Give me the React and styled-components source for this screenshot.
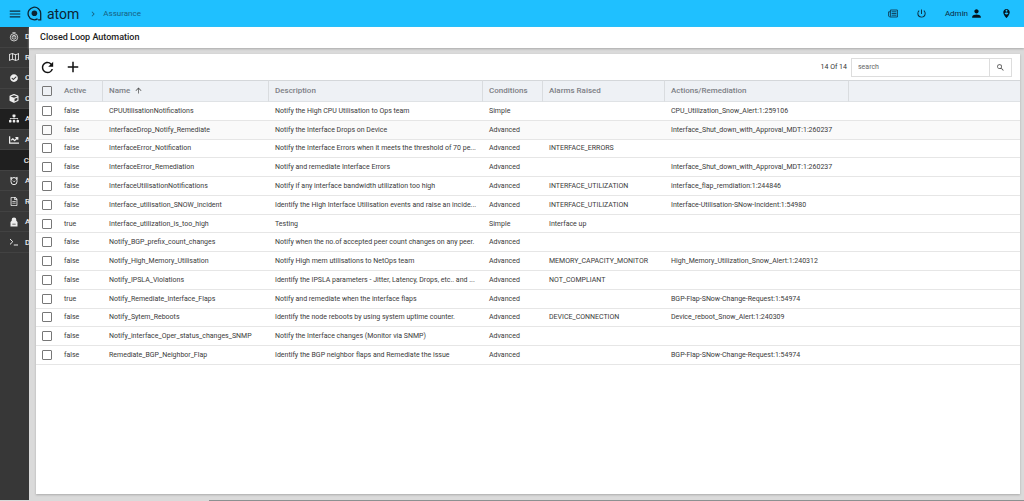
import React, { useState } from 'react';
import styled, { createGlobalStyle } from 'styled-components';
import {
  FaCube,
  FaCheckCircle,
  FaSitemap,
  FaChartLine,
  FaRegMap,
  FaRegFileAlt,
} from 'react-icons/fa';
import {
  MdMenu,
  MdRefresh,
  MdAdd,
  MdArrowUpward,
  MdChevronRight,
  MdPerson,
  MdPersonPinCircle,
  MdPowerSettingsNew,
  MdSearch,
} from 'react-icons/md';

const GlobalStyle = createGlobalStyle`
  * {
    box-sizing: border-box;
  }

  body {
    margin: 0;
    font-family: Roboto, sans-serif;
    font-size: 7px;
    color: #3a3a3a;
    background: #dadada;
  }

  button {
    display: flex;
    align-items: center;
    justify-content: center;
    padding: 0;
    border: 0;
    background: none;
    color: inherit;
    font: inherit;
    cursor: pointer;
  }
`;

const Root = styled.div`
  display: flex;
  flex-direction: column;
  height: 100vh;
`;

const TopBar = styled.header`
  display: flex;
  align-items: center;
  flex: none;
  height: 27px;
  padding: 0 12px 0 8px;
  background: #1fc0ff;
  color: #0c2a3c;
  font-size: 8px;
`;

const Brand = styled.a`
  display: flex;
  align-items: center;
  gap: 5px;
  margin-left: 5px;
  color: #0c2433;
  font-size: 14px;
  line-height: 24px;
  text-decoration: none;
`;

const Crumbs = styled.nav`
  display: flex;
  align-items: center;
  gap: 5px;
  margin-left: 9px;
  color: #17607f;

  a {
    color: inherit;
    text-decoration: none;
  }
`;

const TopActions = styled.div`
  display: flex;
  align-items: center;
  gap: 18px;
  margin-left: auto;
`;

const UserButton = styled.button`
  gap: 2px;
`;

const Body = styled.div`
  display: flex;
  flex: 1;
  min-height: 0;
`;

const SideBar = styled.nav`
  flex: none;
  width: 29px;
  overflow: hidden;
  background: #373737;
`;

const SideList = styled.ul`
  display: flex;
  flex-direction: column;
  height: 226px;
  margin: 0;
  padding: 0;
  list-style: none;
`;

const SideItem = styled.li`
  flex: 1;
  border-bottom: 1px solid #424242;
  background: ${props => (props.$dark ? '#1f1f1f' : 'transparent')};
`;

const SideLink = styled.a`
  display: flex;
  align-items: center;
  gap: 6px;
  height: 100%;
  padding-left: 9px;
  color: #eee;
  font-size: 8px;
  font-weight: 500;
  text-decoration: none;
  white-space: nowrap;

  svg {
    flex: none;
    width: 10px;
  }
`;

const SideIndent = styled.span`
  width: 11px;
`;

const Main = styled.main`
  display: flex;
  flex: 1;
  flex-direction: column;
  min-width: 0;
`;

const PageTitle = styled.h1`
  flex: none;
  margin: 0;
  padding-left: 11px;
  background: #fff;
  box-shadow: 0 1px 2px #aaa;
  color: #222;
  font-size: 9px;
  font-weight: 500;
  line-height: 21px;
`;

const Panel = styled.section`
  flex: 1;
  margin: 6px 4px 6px 7px;
  background: #fff;
  box-shadow: 0 1px 2px #aaa;
`;

const Toolbar = styled.div`
  display: flex;
  align-items: center;
  gap: 8px;
  height: 26px;
  padding: 0 8px 0 3px;
  color: #111;
`;

const Count = styled.span`
  margin-left: auto;
  color: #333;
`;

const SearchBox = styled.form`
  display: flex;
  width: 161px;
  height: 19px;
  margin-left: -4px;
  border: 1px solid #ddd;
`;

const SearchInput = styled.input`
  flex: 1;
  min-width: 0;
  padding: 0 6px;
  border: 0;
  outline: 0;
  color: #444;
  font: inherit;

  &::placeholder {
    color: #666;
  }
`;

const SearchButton = styled.button`
  && {
    width: 22px;
    border-left: 1px solid #ddd;
    color: #444;
  }
`;

const Table = styled.table`
  width: 100%;
  height: 285px;
  border-collapse: separate;
  border-spacing: 0;
  table-layout: fixed;
`;

const HeadCell = styled.th`
  height: 22px;
  padding: 0 6px;
  border-top: 1px solid #d4d7da;
  border-bottom: 1px solid #dfe2e5;
  border-right: ${props => (props.$line ? '1px solid #d9dcdf' : '0')};
  background: #eef1f5;
  color: #7d8085;
  font-size: 8px;
  font-weight: 500;
  line-height: 10px;
  text-align: left;
  white-space: nowrap;

  svg {
    margin-left: 4px;
    color: #555;
    vertical-align: top;
  }
`;

const Row = styled.tr`
  background: ${props => (props.$hover ? '#fafafa' : '#fff')};
`;

const Cell = styled.td`
  height: 18px;
  padding: 0 6px;
  overflow: hidden;
  border-bottom: 1px solid #e6e6e6;
  line-height: 12px;
  text-overflow: ellipsis;
  white-space: nowrap;
`;

const Check = styled.input`
  display: block;
  width: 10px;
  height: 10px;
  margin: 0;
  border: 1px solid #777;
  border-radius: 1px;
  appearance: none;

  &:checked {
    background: #1fc0ff;
  }
`;

const BottomStrip = styled.footer`
  flex: none;
  height: 1px;
  margin-left: 209px;
  background: #8c9091;
`;

const columns = [
  { width: 22 },
  { title: 'Active', width: 45, line: true },
  { title: 'Name', width: 166, line: true },
  { title: 'Description', width: 214, line: true },
  { title: 'Conditions', width: 60, line: true },
  { title: 'Alarms Raised', width: 122, line: true },
  { title: 'Actions/Remediation', width: 184, line: true },
  {},
];

const rules = [
  ['false', 'CPUUtilisationNotifications', 'Notify the High CPU Utilisation to Ops team', 'Simple', '', 'CPU_Utilization_Snow_Alert:1:259106'],
  ['false', 'InterfaceDrop_Notify_Remediate', 'Notify the Interface Drops on Device', 'Advanced', '', 'Interface_Shut_down_with_Approval_MDT:1:260237'],
  ['false', 'InterfaceError_Notification', 'Notify the Interface Errors when it meets the threshold of 70 pe...', 'Advanced', 'INTERFACE_ERRORS', ''],
  ['false', 'InterfaceError_Remediation', 'Notify and remediate Interface Errors', 'Advanced', '', 'Interface_Shut_down_with_Approval_MDT:1:260237'],
  ['false', 'InterfaceUtilisationNotifications', 'Notify if any interface bandwidth utilization too high', 'Advanced', 'INTERFACE_UTILIZATION', 'interface_flap_remdiation:1:244846'],
  ['false', 'Interface_utilisation_SNOW_incident', 'Identify the High Interface Utilisation events and raise an incide...', 'Advanced', 'INTERFACE_UTILIZATION', 'Interface-Utilisation-SNow-Incident:1:54980'],
  ['true', 'Interface_utilization_is_too_high', 'Testing', 'Simple', 'Interface up', ''],
  ['false', 'Notify_BGP_prefix_count_changes', 'Notify when the no.of accepted peer count changes on any peer.', 'Advanced', '', ''],
  ['false', 'Notify_High_Memory_Utilisation', 'Notify High mem utilisations to NetOps team', 'Advanced', 'MEMORY_CAPACITY_MONITOR', 'High_Memory_Utilization_Snow_Alert:1:240312'],
  ['false', 'Notify_IPSLA_Violations', 'Identify the IPSLA parameters - Jitter, Latency, Drops, etc.. and ...', 'Advanced', 'NOT_COMPLIANT', ''],
  ['true', 'Notify_Remediate_Interface_Flaps', 'Notify and remediate when the interface flaps', 'Advanced', '', 'BGP-Flap-SNow-Change-Request:1:54974'],
  ['false', 'Notify_Sytem_Reboots', 'Identify the node reboots by using system uptime counter.', 'Advanced', 'DEVICE_CONNECTION', 'Device_reboot_Snow_Alert:1:240309'],
  ['false', 'Notify_interface_Oper_status_changes_SNMP', 'Notify the Interface changes (Monitor via SNMP)', 'Advanced', '', ''],
  ['false', 'Remediate_BGP_Neighbor_Flap', 'Identify the BGP neighbor flaps and Remediate the issue', 'Advanced', '', 'BGP-Flap-SNow-Change-Request:1:54974'],
];

function LogoMark() {
  return (
    <svg width="15" height="15" viewBox="0 0 15 15" fill="none" stroke="currentColor">
      <path d="M10.6 12.9A6.3 6.3 0 1 1 13.7 7.5v6.3h-2.6" strokeWidth="1.3" />
      <circle cx="7.4" cy="7.3" r="2.8" fill="currentColor" stroke="none" />
    </svg>
  );
}

function GaugeIcon() {
  return (
    <svg width="10" height="10" viewBox="0 0 10 10" fill="none" stroke="currentColor" strokeWidth="0.8">
      <circle cx="5" cy="5.3" r="3.7" />
      <circle cx="5" cy="5.3" r="1.9" />
      <path d="M3.4 0.7h3.2M5 3.6v2" />
    </svg>
  );
}

function NewsIcon() {
  return (
    <svg width="10" height="9" viewBox="0 0 10 9" fill="none" stroke="currentColor" strokeWidth="0.8">
      <path d="M2.4 1h7v7H1.6L.6 7V2.8h1.8M2.4 1v6.6M3.6 2.8h4.8M3.6 4.5h4.8M3.6 6.2h4.8" />
    </svg>
  );
}

function ClockIcon() {
  return (
    <svg width="10" height="10" viewBox="0 0 10 10" fill="none" stroke="currentColor">
      <path d="M2 4.5v1.2a3 3 0 0 0 6 0V4.5a3 3 0 0 0-6 0zM1.6 1.4l1.6.7M8.4 1.4l-1.6.7M1.9 1.6v2M8.1 1.6v2" />
      <path d="M3.8 4.6L5 5.8l1.3-1.2" strokeWidth="0.8" />
    </svg>
  );
}

function BagIcon() {
  return (
    <svg width="10" height="10" viewBox="0 0 10 10" fill="currentColor">
      <path d="M5 .4a2.3 2.3 0 0 1 2.3 2.3v1.1L8.5 5v4.4h-7V5l1.2-1.2V2.7A2.3 2.3 0 0 1 5 .4z" />
      <path d="M3.3 7.2h3.4" stroke="#373737" strokeWidth="0.7" />
    </svg>
  );
}

function PromptIcon() {
  return (
    <svg width="10" height="10" viewBox="0 0 10 10" fill="none" stroke="currentColor">
      <path d="M1 2l2.8 2.7L1 7.4M4.8 8H9" />
    </svg>
  );
}

const menu = [
  { label: 'D', icon: <GaugeIcon /> },
  { label: 'R', icon: <FaRegMap size={10} /> },
  { label: 'C', icon: <FaCheckCircle size={8} /> },
  { label: 'C', icon: <FaCube size={9} /> },
  { label: 'A', icon: <FaSitemap size={9} />, dark: true },
  { label: 'A', icon: <FaChartLine size={10} /> },
  { label: 'C', dark: true },
  { label: 'A', icon: <ClockIcon /> },
  { label: 'R', icon: <FaRegFileAlt size={9} /> },
  { label: 'A', icon: <BagIcon /> },
  { label: 'D', icon: <PromptIcon /> },
];

function App() {
  const [query, setQuery] = useState('');
  const shown = rules.filter(rule => rule.join(' ').toLowerCase().includes(query.toLowerCase()));

  return (
    <Root>
      <GlobalStyle />
      <TopBar>
        <button type="button" aria-label="Menu"><MdMenu size={14} /></button>
        <Brand href="#home">
          <LogoMark />
          atom
        </Brand>
        <Crumbs>
          <MdChevronRight size={10} />
          <a href="#assurance">Assurance</a>
        </Crumbs>
        <TopActions>
          <button type="button" aria-label="News"><NewsIcon /></button>
          <button type="button" aria-label="Log out"><MdPowerSettingsNew size={11} /></button>
          <UserButton type="button">
            Admin
            <MdPerson size={13} color="#04141e" />
          </UserButton>
          <button type="button" aria-label="Location"><MdPersonPinCircle size={11} color="#04141e" /></button>
        </TopActions>
      </TopBar>
      <Body>
        <SideBar>
          <SideList>
            {menu.map((item, i) => (
              <SideItem key={i} $dark={item.dark}>
                <SideLink href="#menu">
                  {item.icon || <SideIndent />}
                  {item.label}
                </SideLink>
              </SideItem>
            ))}
          </SideList>
        </SideBar>
        <Main>
          <PageTitle>Closed Loop Automation</PageTitle>
          <Panel>
            <Toolbar>
              <button type="button" aria-label="Refresh"><MdRefresh size={17} /></button>
              <button type="button" aria-label="Add"><MdAdd size={18} /></button>
              <Count>14 Of 14</Count>
              <SearchBox onSubmit={e => e.preventDefault()}>
                <SearchInput
                  aria-label="search"
                  placeholder="search"
                  value={query}
                  onChange={e => setQuery(e.target.value)}
                />
                <SearchButton type="submit" aria-label="Search"><MdSearch size={9} /></SearchButton>
              </SearchBox>
            </Toolbar>
            <Table>
              <colgroup>
                {columns.map((col, i) => <col key={i} width={col.width} />)}
              </colgroup>
              <thead>
                <tr>
                  {columns.map((col, i) => (
                    <HeadCell key={i} $line={col.line}>
                      {i === 0 && <Check type="checkbox" aria-label="Select all" />}
                      {col.title}
                      {col.title === 'Name' && <MdArrowUpward size={9} />}
                    </HeadCell>
                  ))}
                </tr>
              </thead>
              <tbody>
                {shown.map((rule, i) => (
                  <Row key={rule[1]} $hover={i === 1}>
                    <Cell><Check type="checkbox" aria-label={rule[1]} /></Cell>
                    {rule.map((text, j) => <Cell key={j}>{text}</Cell>)}
                    <Cell />
                  </Row>
                ))}
              </tbody>
            </Table>
          </Panel>
        </Main>
      </Body>
      <BottomStrip />
    </Root>
  );
}

export default App;
